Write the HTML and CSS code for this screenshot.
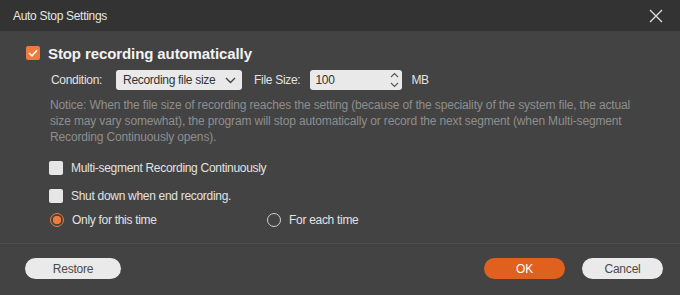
FILE: index.html
```html
<!DOCTYPE html>
<html lang="en">
<head>
    <meta charset="UTF-8">
    <title>Auto Stop Settings</title>
    <link rel="stylesheet" href="styles.css">
</head>
<body>
    <div class="dialog">
        <div class="titlebar">
            <span class="title">Auto Stop Settings</span>
            <button class="close-button" aria-label="Close">
                <svg width="14" height="14" viewBox="0 0 14 14"><path d="M1 1 L13 13 M13 1 L1 13" stroke="#e0e0e0" stroke-width="1.3" fill="none"/></svg>
            </button>
        </div>

        <div class="content">
            <label class="main-check">
                <span class="check checked">
                    <svg width="10" height="8" viewBox="0 0 10 8"><path d="M1 4 L4 6.8 L9 1.2" stroke="#fff" stroke-width="1.6" fill="none"/></svg>
                </span>
                <span class="main-label">Stop recording automatically</span>
            </label>

            <div class="condition-row">
                <span>Condition:</span>
                <div class="select">
                    <span>Recording file size</span>
                    <svg width="11" height="7" viewBox="0 0 11 7"><path d="M1 1 L5.5 5.5 L10 1" stroke="#444" stroke-width="1.4" fill="none"/></svg>
                </div>
                <span class="size-label">File Size:</span>
                <div class="spin">
                    <span>100</span>
                    <div class="spin-arrows">
                        <svg width="9" height="6" viewBox="0 0 9 6"><path d="M1 5 L4.5 1.5 L8 5" stroke="#555" stroke-width="1.1" fill="none"/></svg>
                        <svg width="9" height="6" viewBox="0 0 9 6"><path d="M1 1 L4.5 4.5 L8 1" stroke="#555" stroke-width="1.1" fill="none"/></svg>
                    </div>
                </div>
                <span>MB</span>
            </div>

            <p class="notice">Notice: When the file size of recording reaches the setting (because of the speciality of the system file, the actual<br>size may vary somewhat), the program will stop automatically or record the next segment (when Multi-segment<br>Recording Continuously opens).</p>

            <label class="option">
                <span class="check"></span>
                <span>Multi-segment Recording Continuously</span>
            </label>
            <label class="option">
                <span class="check"></span>
                <span>Shut down when end recording.</span>
            </label>

            <div class="radio-row">
                <label class="radio-item">
                    <span class="radio selected"></span>
                    <span>Only for this time</span>
                </label>
                <label class="radio-item">
                    <span class="radio"></span>
                    <span>For each time</span>
                </label>
            </div>
        </div>

        <div class="footer">
            <button class="btn restore">Restore</button>
            <div class="footer-right">
                <button class="btn ok">OK</button>
                <button class="btn cancel">Cancel</button>
            </div>
        </div>
    </div>
</body>
</html>
```

FILE: styles.css
```css
body {
    margin: 0;
    padding: 0;
    background-color: #434343;
    font-family: 'Liberation Sans', Arial, sans-serif;
    font-size: 12px;
    letter-spacing: -0.3px;
    color: #e2e2e2;
    overflow: hidden;
}

.dialog {
    width: 680px;
    height: 295px;
    display: flex;
    flex-direction: column;
}

.titlebar {
    height: 31px;
    flex-shrink: 0;
    background-color: #333;
    display: flex;
    align-items: center;
    justify-content: space-between;
    padding: 0 17px 0 13px;
}

.title {
    font-size: 12px;
    color: #e6e6e6;
}

.close-button {
    background: none;
    border: none;
    padding: 0;
    width: 14px;
    height: 14px;
    display: flex;
    cursor: pointer;
}

.content {
    padding: 14px 0 0 26px;
    height: 212px;
    flex-shrink: 0;
    box-sizing: border-box;
}

.check {
    width: 14px;
    height: 14px;
    border-radius: 2px;
    background-color: #e6e6e6;
    display: flex;
    align-items: center;
    justify-content: center;
    flex-shrink: 0;
}

.check.checked {
    background-color: #f07a3c;
}

.main-check {
    display: flex;
    align-items: center;
    gap: 8px;
    height: 16px;
}

.main-label {
    font-size: 15px;
    font-weight: bold;
    letter-spacing: -0.1px;
    color: #f2f2f2;
}

.condition-row {
    display: flex;
    align-items: center;
    margin: 9px 0 0 25px;
    height: 20px;
}

.select {
    width: 126px;
    height: 20px;
    box-sizing: border-box;
    background-color: #e9e9e9;
    border-radius: 3px;
    margin-left: 14px;
    display: flex;
    align-items: center;
    justify-content: space-between;
    padding: 0 6px 0 7px;
    color: #333;
}

.size-label {
    margin-left: 12px;
}

.spin {
    width: 92px;
    height: 20px;
    box-sizing: border-box;
    background-color: #e9e9e9;
    border-radius: 3px;
    margin: 0 9px 0 10px;
    display: flex;
    align-items: center;
    justify-content: space-between;
    padding: 0 3px 0 5px;
    color: #333;
}

.spin-arrows {
    display: flex;
    flex-direction: column;
    gap: 4px;
}

.notice {
    margin: 7px 0 0 24px;
    line-height: 16px;
    letter-spacing: -0.15px;
    color: #8e8e8e;
}

.option {
    display: flex;
    align-items: center;
    gap: 8px;
    margin-left: 23px;
    height: 14px;
    margin-top: 16px;
}

.option + .option {
    margin-top: 14px;
}

.radio-row {
    display: flex;
    margin: 10px 0 0 24px;
    height: 14px;
}

.radio-item {
    display: flex;
    align-items: center;
    gap: 8px;
    width: 217px;
}

.radio {
    width: 14px;
    height: 14px;
    box-sizing: border-box;
    border: 1.5px solid #d0d0d0;
    border-radius: 50%;
}

.radio.selected {
    border-color: #f07a3c;
    background: radial-gradient(circle, #f07a3c 0 4px, transparent 4.5px);
}

.footer {
    border-top: 1px solid #4e4e4e;
    flex: 1;
    display: flex;
    justify-content: space-between;
    align-items: flex-start;
    padding: 14px 17px 0 25px;
}

.footer-right {
    display: flex;
    gap: 17px;
}

.btn {
    height: 21px;
    border: none;
    border-radius: 11px;
    font-family: 'Liberation Sans', Arial, sans-serif;
    font-size: 12px;
    letter-spacing: -0.2px;
    padding: 0;
    cursor: pointer;
}

.restore {
    width: 96px;
    background-color: #eaeaea;
    color: #4a4a4a;
}

.ok {
    width: 81px;
    background-color: #e0601e;
    color: #fff;
}

.cancel {
    width: 81px;
    background-color: #eaeaea;
    color: #4a4a4a;
}
```
